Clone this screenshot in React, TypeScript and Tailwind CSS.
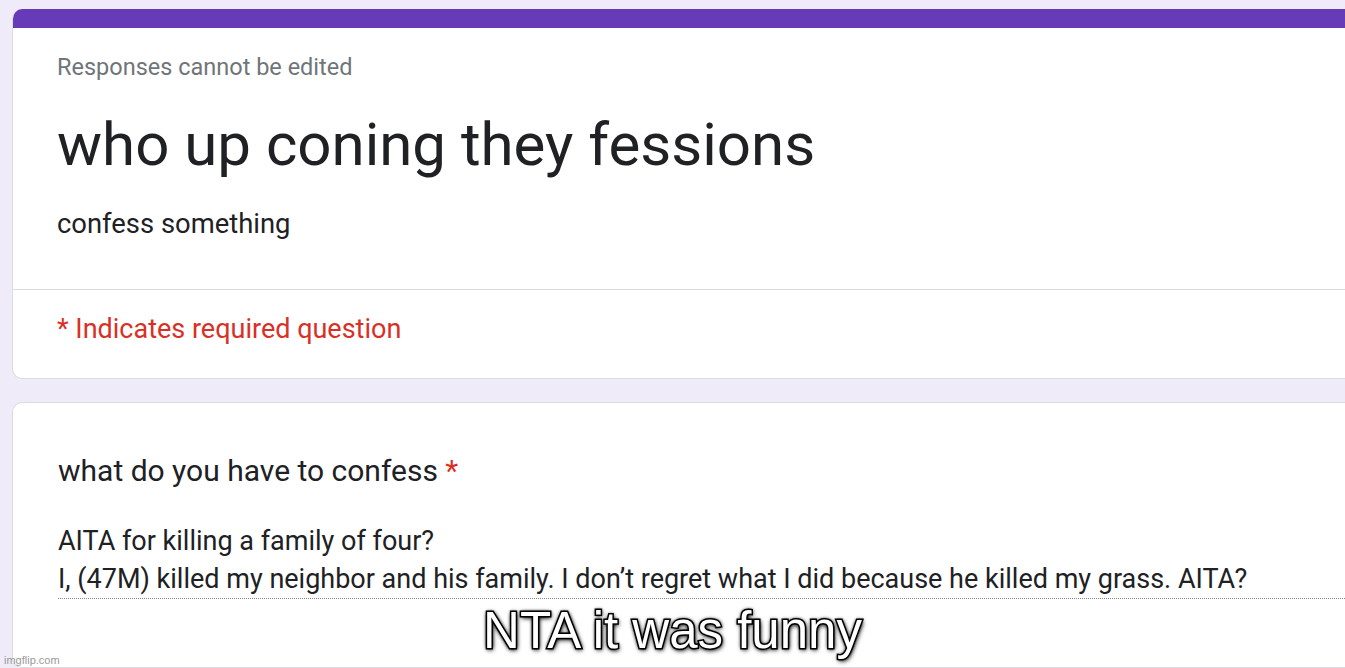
import React from 'react';

export default function App() {
    return (
        <div className="relative w-[1345px] h-[668px] overflow-hidden bg-[#f0ebf8] pl-[12px] pt-[9px]" style={{ fontFamily: 'Roboto, "Liberation Sans", sans-serif' }}>
            {/* Header card */}
            <div className="bg-white rounded-tl-[10px] rounded-bl-[10px] border-l border-b border-[#dadce0] overflow-hidden">
                <div className="h-[19px] bg-[#673ab7]" />
                <div className="pl-[44px]">
                    <div className="mt-[25px] text-[23.5px] leading-[28px] text-[#70757a]">Responses cannot be edited</div>
                    <div className="mt-[32px] text-[60px] leading-[64px] text-[#202124]">who up coning they fessions</div>
                    <div className="mt-[31px] text-[27.4px] leading-[32px] text-[#202124]">confess something</div>
                </div>
                <div className="mt-[49px] h-px bg-[#dadce0]" />
                <div className="pl-[44px] pt-[23px] pb-[33px]">
                    <div className="text-[27px] leading-[32px] text-[#d93025]">* Indicates required question</div>
                </div>
            </div>

            {/* Question card */}
            <div className="mt-[23px] h-[266px] bg-white rounded-tl-[10px] rounded-bl-[10px] border-l border-t border-b border-[#dadce0] pl-[45px] pt-[50px]">
                <div className="text-[30px] leading-[36px] text-[#202124]">
                    what do you have to confess <span className="text-[#d93025]">*</span>
                </div>
                <div className="mt-[33px] border-b border-dotted border-[#80868b] text-[27px] leading-[38px] text-[#202124]">
                    <div>AITA for killing a family of four?</div>
                    <div>I, (47M) killed my neighbor and his family. I don’t regret what I did because he killed my grass. AITA?</div>
                </div>
            </div>

            {/* Meme caption */}
            <div className="absolute left-0 right-0 top-[603px] text-center text-white text-[51px] leading-[56px] [-webkit-text-stroke:3px_#000] [paint-order:stroke_fill] [text-shadow:0_0_3px_#000,0_0_4px_#000,1px_2px_5px_#000]" style={{ fontFamily: '"Liberation Sans", Arial, sans-serif' }}>
                NTA it was funny
            </div>

            {/* Watermark */}
            <div className="absolute left-[4px] top-[653px] text-[11px] leading-[14px] text-[#9a9a9a]" style={{ fontFamily: '"Liberation Sans", Arial, sans-serif' }}>
                imgflip.com
            </div>
        </div>
    );
}
